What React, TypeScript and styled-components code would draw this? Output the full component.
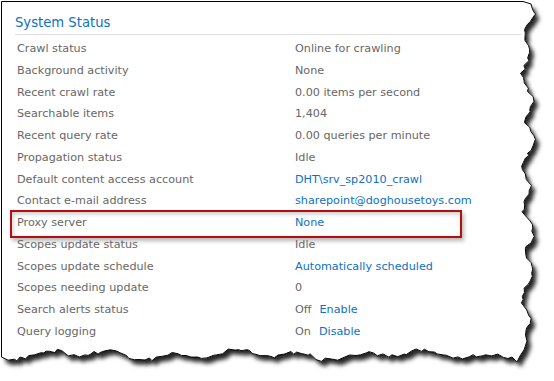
import React from 'react'
import styled, { createGlobalStyle } from 'styled-components'

type Part = { text: string; link?: boolean }
type Item = { label: string; value: Part[]; highlight?: boolean }

const items: Item[] = [
    { label: 'Crawl status', value: [{ text: 'Online for crawling' }] },
    { label: 'Background activity', value: [{ text: 'None' }] },
    { label: 'Recent crawl rate', value: [{ text: '0.00 items per second' }] },
    { label: 'Searchable items', value: [{ text: '1,404' }] },
    { label: 'Recent query rate', value: [{ text: '0.00 queries per minute' }] },
    { label: 'Propagation status', value: [{ text: 'Idle' }] },
    { label: 'Default content access account', value: [{ text: 'DHT\\srv_sp2010_crawl', link: true }] },
    { label: 'Contact e-mail address', value: [{ text: 'sharepoint@doghousetoys.com', link: true }] },
    { label: 'Proxy server', value: [{ text: 'None', link: true }], highlight: true },
    { label: 'Scopes update status', value: [{ text: 'Idle' }] },
    { label: 'Scopes update schedule', value: [{ text: 'Automatically scheduled', link: true }] },
    { label: 'Scopes needing update', value: [{ text: '0' }] },
    { label: 'Search alerts status', value: [{ text: 'Off' }, { text: 'Enable', link: true }] },
    { label: 'Query logging', value: [{ text: 'On' }, { text: 'Disable', link: true }] },
]

// torn paper outline, built once
function seeded(seed: number) {
    let s = seed
    return () => {
        s = (s * 16807) % 2147483647
        return s / 2147483647
    }
}

function tornPath() {
    const r = seeded(11)
    const pts: [number, number][] = [[1.5, 1.5], [523, 1.5], [531, 4]]
    for (let y = 8; y < 336; y += 2 + r() * 4) {
        const x = 528 + 4 * Math.sin(y / 7) + 2.5 * Math.sin(y / 19 + 1) + (r() - 0.5) * 4
        pts.push([x, y])
    }
    pts.push([527, 341], [524, 350], [520, 356], [517, 362], [512, 357])
    for (let x = 508; x > 4; x -= 2 + r() * 5) {
        const y = 355 + 3 * Math.sin(x / 10) + 2.5 * Math.sin(x / 27 + 2) + (r() - 0.5) * 4
        pts.push([x, y])
    }
    pts.push([1.5, 357])
    return 'M' + pts.map(p => p[0].toFixed(1) + ' ' + p[1].toFixed(1)).join(' L') + ' Z'
}

const TORN = tornPath()

export default function App() {
    return <Sheet>
        <GlobalStyle />
        <Paper width="554" height="381" viewBox="0 0 554 381">
            <defs>
                <filter id="tear-shadow" x="-5%" y="-5%" width="115%" height="115%">
                    <feDropShadow dx="4" dy="5" stdDeviation="2" floodColor="#000" floodOpacity="0.85" />
                </filter>
            </defs>
            <path d={TORN} fill="#fff" filter="url(#tear-shadow)" />
            <path d={TORN} fill="none" stroke="#000" strokeWidth="1" />
        </Paper>

        <Content>
            <Title>System Status</Title>
            <Rows>
                {items.map((item) =>
                    <Row key={item.label} $highlight={item.highlight}>
                        <Label>{item.label}</Label>
                        <Value>
                            {item.value.map((part, i) =>
                                <Part key={i} $link={part.link} $gap={i > 0}>{part.text}</Part>
                            )}
                        </Value>
                    </Row>
                )}
            </Rows>
        </Content>
    </Sheet>
}

const GlobalStyle = createGlobalStyle`
html, body {
  margin:0;
  padding:0;
  background:#fff;
}
body {
  font-family: "DejaVu Sans", Verdana, sans-serif;
}
`;

const Sheet = styled.div`
position:relative;
width:554px;
height:381px;
overflow:hidden;
background:#fff;
`;

const Paper = styled.svg`
position:absolute;
left:0;
top:0;
z-index:0;
`;

const Content = styled.div`
position:relative;
z-index:1;
display:flex;
flex-direction:column;
padding:15px 0 0 15px;
`;

const Title = styled.div`
width:507px;
font-size:13.2px;
line-height:16px;
color:#0f6fc6;
padding-bottom:3px;
border-bottom:1px solid #e2e2e2;
`;

const Rows = styled.div`
display:flex;
flex-direction:column;
margin-top:3px;
padding-left:2px;
`;

const Row = styled.div<{ $highlight?: boolean }>`
position:relative;
display:grid;
grid-template-columns:278px 1fr;
height:21.77px;
line-height:21.77px;
font-size:11.2px;
color:#676767;
white-space:nowrap;

${p => p.$highlight && `
&::after {
  content:'';
  position:absolute;
  left:-7px;
  top:-2.5px;
  width:448px;
  height:24px;
  border:2px solid #b50d10;
  box-shadow: 2px 3px 4px rgba(0,0,0,0.28), inset 1px 2px 4px rgba(0,0,0,0.22);
}
`}
`;

const Label = styled.span`
overflow:hidden;
`;

const Value = styled.span`
display:flex;
`;

const Part = styled.span<{ $link?: boolean; $gap?: boolean }>`
color:${p => p.$link ? '#0f6fc6' : '#676767'};
margin-left:${p => p.$gap ? '8px' : '0'};
`;
